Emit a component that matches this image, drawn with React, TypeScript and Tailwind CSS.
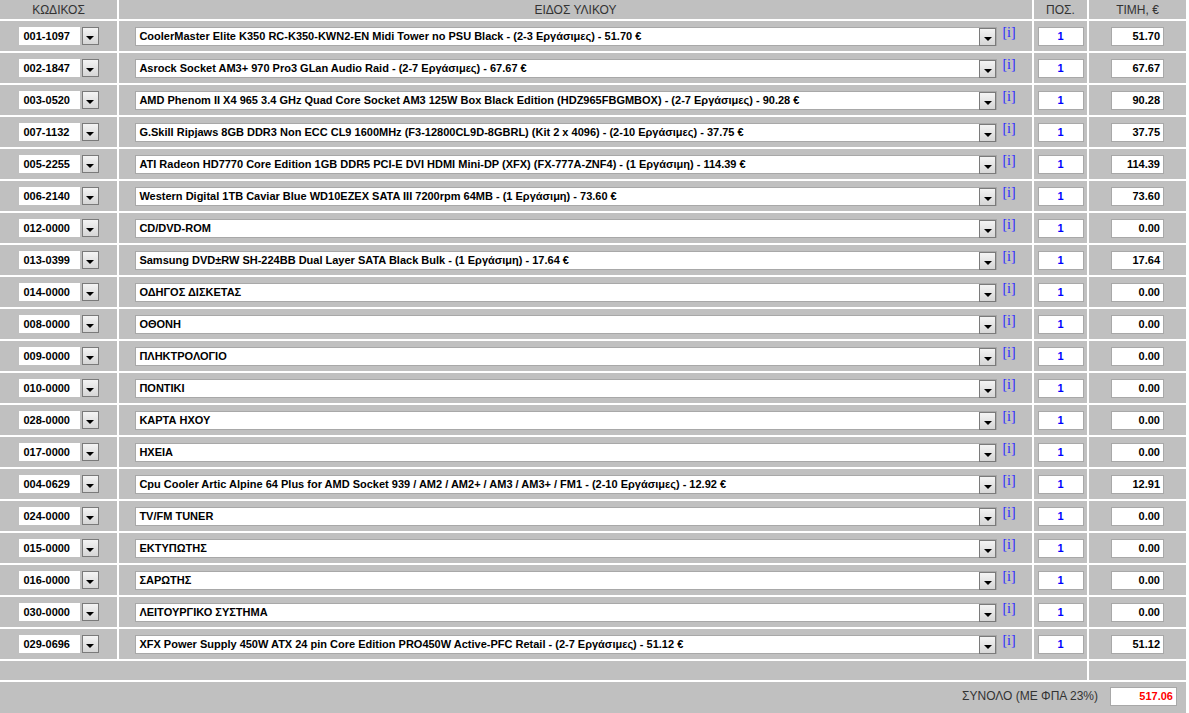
import React from "react";

type Row = { code: string; desc: string; price: string };

const rows: Row[] = [
  { code: "001-1097", desc: "CoolerMaster Elite K350 RC-K350-KWN2-EN Midi Tower no PSU Black - (2-3 Εργάσιμες) - 51.70 €", price: "51.70" },
  { code: "002-1847", desc: "Asrock Socket AM3+ 970 Pro3 GLan Audio Raid - (2-7 Εργάσιμες) - 67.67 €", price: "67.67" },
  { code: "003-0520", desc: "AMD Phenom II X4 965 3.4 GHz Quad Core Socket AM3 125W Box Black Edition (HDZ965FBGMBOX) - (2-7 Εργάσιμες) - 90.28 €", price: "90.28" },
  { code: "007-1132", desc: "G.Skill Ripjaws 8GB DDR3 Non ECC CL9 1600MHz (F3-12800CL9D-8GBRL) (Kit 2 x 4096) - (2-10 Εργάσιμες) - 37.75 €", price: "37.75" },
  { code: "005-2255", desc: "ATI Radeon HD7770 Core Edition 1GB DDR5 PCI-E DVI HDMI Mini-DP (XFX) (FX-777A-ZNF4) - (1 Εργάσιμη) - 114.39 €", price: "114.39" },
  { code: "006-2140", desc: "Western Digital 1TB Caviar Blue WD10EZEX SATA III 7200rpm 64MB - (1 Εργάσιμη) - 73.60 €", price: "73.60" },
  { code: "012-0000", desc: "CD/DVD-ROM", price: "0.00" },
  { code: "013-0399", desc: "Samsung DVD±RW SH-224BB Dual Layer SATA Black Bulk - (1 Εργάσιμη) - 17.64 €", price: "17.64" },
  { code: "014-0000", desc: "ΟΔΗΓΟΣ ΔΙΣΚΕΤΑΣ", price: "0.00" },
  { code: "008-0000", desc: "ΟΘΟΝΗ", price: "0.00" },
  { code: "009-0000", desc: "ΠΛΗΚΤΡΟΛΟΓΙΟ", price: "0.00" },
  { code: "010-0000", desc: "ΠΟΝΤΙΚΙ", price: "0.00" },
  { code: "028-0000", desc: "ΚΑΡΤΑ ΗΧΟΥ", price: "0.00" },
  { code: "017-0000", desc: "ΗΧΕΙΑ", price: "0.00" },
  { code: "004-0629", desc: "Cpu Cooler Artic Alpine 64 Plus for AMD Socket 939 / AM2 / AM2+ / AM3 / AM3+ / FM1 - (2-10 Εργάσιμες) - 12.92 €", price: "12.91" },
  { code: "024-0000", desc: "TV/FM TUNER", price: "0.00" },
  { code: "015-0000", desc: "ΕΚΤΥΠΩΤΗΣ", price: "0.00" },
  { code: "016-0000", desc: "ΣΑΡΩΤΗΣ", price: "0.00" },
  { code: "030-0000", desc: "ΛΕΙΤΟΥΡΓΙΚΟ ΣΥΣΤΗΜΑ", price: "0.00" },
  { code: "029-0696", desc: "XFX Power Supply 450W ATX 24 pin Core Edition PRO450W Active-PFC Retail - (2-7 Εργάσιμες) - 51.12 €", price: "51.12" },
];

function DropBtn() {
  return (
    <div className="w-[17px] h-[18px] border border-[#7a7a7a] bg-gradient-to-b from-[#f4f4f4] to-[#d6d6d6] flex justify-center items-center">
      <div className="mt-[4px] w-0 h-0 border-l-[4px] border-r-[4px] border-t-[4px] border-l-transparent border-r-transparent border-t-black" />
    </div>
  );
}

export default function App() {
  const font = "font-['Liberation_Sans',Arial,sans-serif]";
  return (
    <div className={`w-[1189px] h-[713px] bg-white overflow-hidden ${font}`}>
      <div className="w-[1186px] grid grid-cols-[117px_913px_53px_97px] gap-[2px] bg-white">
        {/* header */}
        <div className="bg-[#c0c0c0] h-[19px] flex items-center justify-center text-[12px] text-[#333333]">ΚΩΔΙΚΟΣ</div>
        <div className="bg-[#c0c0c0] h-[19px] flex items-center justify-center text-[12px] text-[#333333]">ΕΙΔΟΣ ΥΛΙΚΟΥ</div>
        <div className="bg-[#c0c0c0] h-[19px] flex items-center justify-center text-[12px] text-[#333333]">ΠΟΣ.</div>
        <div className="bg-[#c0c0c0] h-[19px] flex items-center justify-center text-[12px] text-[#333333]">ΤΙΜΗ, €</div>

        {rows.map((r) => (
          <React.Fragment key={r.code}>
            <div className="bg-[#c0c0c0] h-[30px] flex items-center justify-center gap-[2px]">
              <div className="w-[61px] h-[18px] bg-white flex items-center pl-[5px] text-[11px] font-bold text-black leading-none">
                {r.code}
              </div>
              <DropBtn />
            </div>
            <div className="bg-[#c0c0c0] h-[30px] flex items-start justify-center pt-[6px]">
              <div className="w-[862px] h-[19px] bg-white border border-[#a8a8a8] flex items-center justify-between pl-[3px]">
                <span className="text-[11px] font-bold text-black leading-none whitespace-nowrap">{r.desc}</span>
                <DropBtn />
              </div>
              <span className="ml-[5px] -mt-[3px] text-[14px] text-[#2b2bff] font-['Liberation_Serif',serif] leading-[18px]">[i]</span>
            </div>
            <div className="bg-[#c0c0c0] h-[30px] flex items-center justify-center">
              <div className="w-[46px] h-[19px] bg-white border border-[#a8a8a8] flex items-center justify-center text-[11px] font-bold text-[#0000ff] leading-none">
                1
              </div>
            </div>
            <div className="bg-[#c0c0c0] h-[30px] flex items-center justify-center">
              <div className="w-[53px] h-[19px] bg-white border border-[#a8a8a8] flex items-center justify-end pr-[3px] text-[11px] font-bold text-black leading-none">
                {r.price}
              </div>
            </div>
          </React.Fragment>
        ))}

        {/* empty row */}
        <div className="col-span-3 bg-[#c0c0c0] h-[19px]" />
        <div className="bg-[#c0c0c0] h-[19px]" />

        {/* total */}
        <div className="col-span-4 bg-[#c0c0c0] h-[33px] flex items-start justify-end pt-[5px] pr-[9px]">
          <span className="text-[12px] text-[#333333] leading-[19px] mr-[12px]">ΣΥΝΟΛΟ (ΜΕ ΦΠΑ 23%)</span>
          <div className="w-[67px] h-[19px] bg-white border border-[#a8a8a8] flex items-center justify-end pr-[3px] text-[11px] font-bold text-[#ff0000] leading-none">
            517.06
          </div>
        </div>
      </div>
    </div>
  );
}
